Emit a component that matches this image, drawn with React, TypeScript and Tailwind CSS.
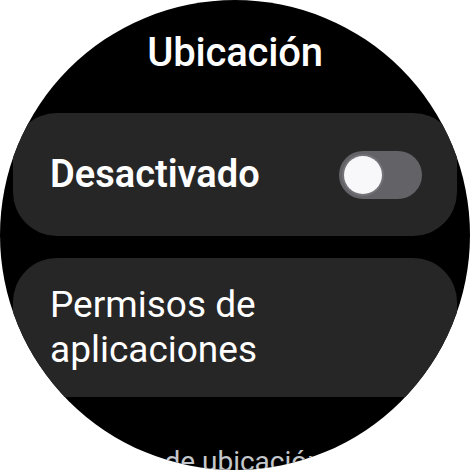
import React from 'react';

const font = { fontFamily: 'Roboto, "Noto Sans", sans-serif' };

const Toggle: React.FC<{ on?: boolean }> = ({ on = false }) => (
  <div className="w-[83px] h-[48px] rounded-full bg-[#636266] flex items-center px-[5px] shrink-0">
    <div className="w-[38px] h-[38px] rounded-full bg-[#f8f8fa] ring-2 ring-[#737277]" style={{ marginLeft: on ? 'auto' : 0 }} />
  </div>
);

export default function App() {
  return (
    <div className="w-[470px] h-[470px] bg-white" style={font}>
      <div className="w-[470px] h-[470px] rounded-full bg-black overflow-hidden flex flex-col">
        <div className="h-[113px] flex justify-center pt-[29px] shrink-0">
          <h1 className="text-[40px] leading-[48px] font-medium text-white tracking-[-0.2px]">Ubicación</h1>
        </div>

        <div className="mx-[13px] h-[123px] rounded-[44px] bg-[#262626] flex items-center justify-between pl-[37px] pr-[35px] shrink-0">
          <span className="text-[38px] font-semibold text-white leading-none pb-[2px]">Desactivado</span>
          <Toggle />
        </div>

        <div className="mx-[13px] mt-[22px] h-[139px] rounded-t-[44px] bg-[#262626] pl-[37px] pt-[24px] shrink-0">
          <p className="text-[37px] leading-[45px] text-white">
            Permisos de
            <br />
            aplicaciones
          </p>
        </div>

        <div className="pl-[44px] pt-[48px] shrink-0">
          <p className="text-[28px] leading-[34px] text-[#c4c7cc] whitespace-nowrap">Servicios de ubicación</p>
        </div>
      </div>
    </div>
  );
}
